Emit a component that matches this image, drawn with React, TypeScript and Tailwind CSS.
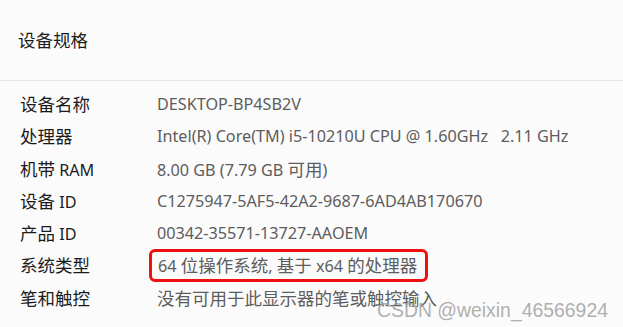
const rows: { label: string; value: string; marked?: boolean }[] = [
  { label: '设备名称', value: 'DESKTOP-BP4SB2V' },
  { label: '处理器', value: 'Intel(R) Core(TM) i5-10210U CPU @ 1.60GHz\u00a0\u00a0\u00a02.11 GHz' },
  { label: '机带 RAM', value: '8.00 GB (7.79 GB 可用)' },
  { label: '设备 ID', value: 'C1275947-5AF5-42A2-9687-6AD4AB170670' },
  { label: '产品 ID', value: '00342-35571-13727-AAOEM' },
  { label: '系统类型', value: '64 位操作系统, 基于 x64 的处理器', marked: true },
  { label: '笔和触控', value: '没有可用于此显示器的笔或触控输入' },
]

// CJK glyphs run a bit larger than the Latin ones in the original
const Mixed = ({ text }: { text: string }) => (
  <span>
    {text.split(/([\u4e00-\u9fff]+)/).map((part, i) =>
      /[\u4e00-\u9fff]/.test(part) ? (
        <span key={i} className="text-[17.5px] font-['Noto_Sans_CJK_SC',sans-serif]">
          {part}
        </span>
      ) : (
        <span key={i}>{part}</span>
      ),
    )}
  </span>
)

export default function App() {
  return (
    <div className="relative w-[623px] h-[327px] overflow-hidden bg-[#fbfbfb] font-['Noto_Sans','Noto_Sans_CJK_SC',sans-serif] text-[16.2px]">
      <div className="h-[80px] flex items-center pl-[18px] text-[#1b1b1b]">
        <Mixed text="设备规格" />
      </div>
      <div className="h-px bg-[#e5e5e5]" />
      <div className="pt-[7px]">
        {rows.map((r) => (
          <div key={r.label} className="h-[32.3px] flex items-center">
            <div className="w-[157px] pl-[20px] text-[#1b1b1b] shrink-0 whitespace-nowrap">
              <Mixed text={r.label} />
            </div>
            {r.marked ? (
              <div className="-ml-[8px] h-[33px] w-[279px] shrink-0 flex items-center pl-[6px] border-[3px] border-[#f01010] rounded-[6px] text-[#5d5d5d] whitespace-nowrap">
                <Mixed text={r.value} />
              </div>
            ) : (
              <div className="text-[#5d5d5d] whitespace-nowrap">
                <Mixed text={r.value} />
              </div>
            )}
          </div>
        ))}
      </div>
      <div className="absolute left-[377px] top-[296px] text-[19.4px] text-[#9a9a9a]/80 font-['Liberation_Sans',sans-serif] whitespace-nowrap">
        CSDN @weixin_46566924
      </div>
    </div>
  )
}
